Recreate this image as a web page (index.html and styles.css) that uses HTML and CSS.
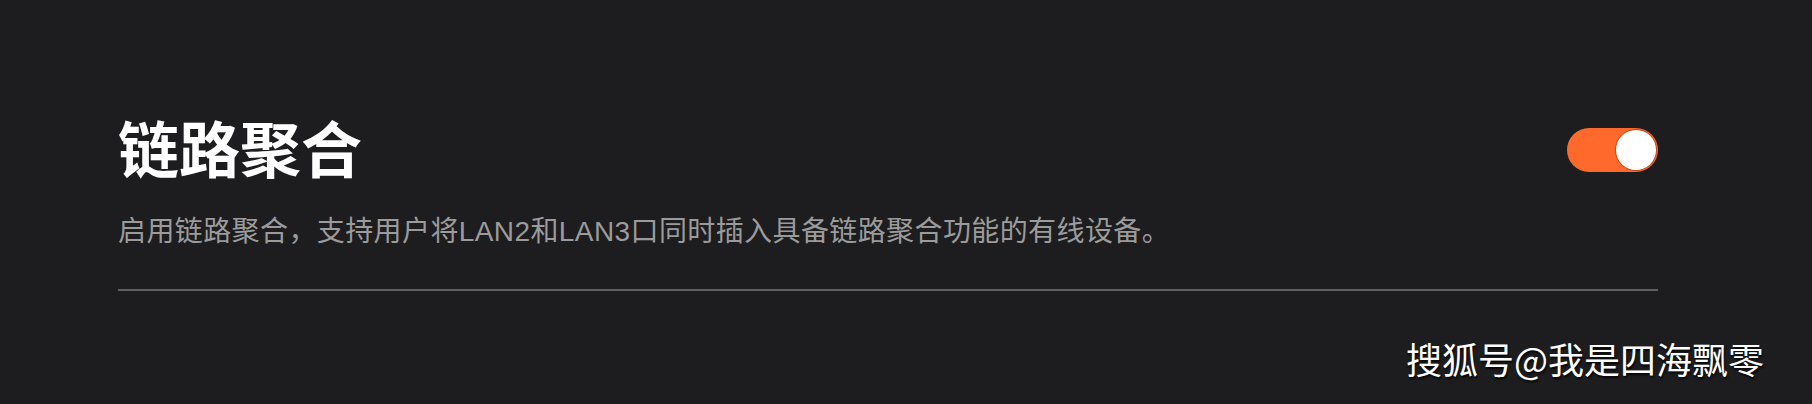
FILE: index.html
```html
<!DOCTYPE html>
<html lang="zh-CN">
<head>
  <meta charset="UTF-8">
  <title>链路聚合</title>
  <link rel="stylesheet" href="styles.css">
</head>
<body>
  <div class="panel">
    <div class="header">
      <h1>链路聚合</h1>
      <div class="toggle on"><span class="knob"></span></div>
    </div>
    <p class="desc">启用链路聚合，支持用户将LAN2和LAN3口同时插入具备链路聚合功能的有线设备。</p>
    <div class="divider"></div>
  </div>

  <div class="watermark">搜狐号@我是四海飘零</div>
</body>
</html>
```

FILE: styles.css
```css
body {
  margin: 0;
  background: #1d1d1f;
  font-family: 'Liberation Sans', 'Noto Sans CJK SC', sans-serif;
  height: 404px;
  overflow: hidden;
}

.panel {
  padding: 116px 154px 0 118px;
}

.header {
  display: flex;
  justify-content: space-between;
  align-items: center;
}

h1 {
  margin: 0;
  font-size: 61px;
  line-height: 61px;
  font-weight: 700;
  color: #ffffff;
  font-family: 'Noto Sans CJK SC', sans-serif;
}

.toggle {
  width: 91px;
  height: 44px;
  margin-top: 6px;
  border-radius: 22px;
  background: #ff6a2c;
  display: flex;
  align-items: center;
  justify-content: flex-end;
  padding: 0 2px;
  box-sizing: border-box;
}

.knob {
  width: 40px;
  height: 40px;
  border-radius: 50%;
  background: #ffffff;
  box-shadow: 0 0 1px 1px rgba(120, 40, 20, 0.5);
}

.desc {
  margin: 41px 0 0;
  font-size: 28px;
  line-height: 28px;
  letter-spacing: 0.4px;
  color: #9b9b9b;
}

.divider {
  margin-top: 43px;
  height: 2px;
  background: #5f5f5f;
}

.watermark {
  position: absolute;
  right: 48px;
  bottom: 20px;
  font-family: 'Noto Sans CJK SC', sans-serif;
  font-size: 36px;
  color: #ffffff;
  text-shadow: 1px 2px 2px rgba(0, 0, 0, 0.8);
}
```
